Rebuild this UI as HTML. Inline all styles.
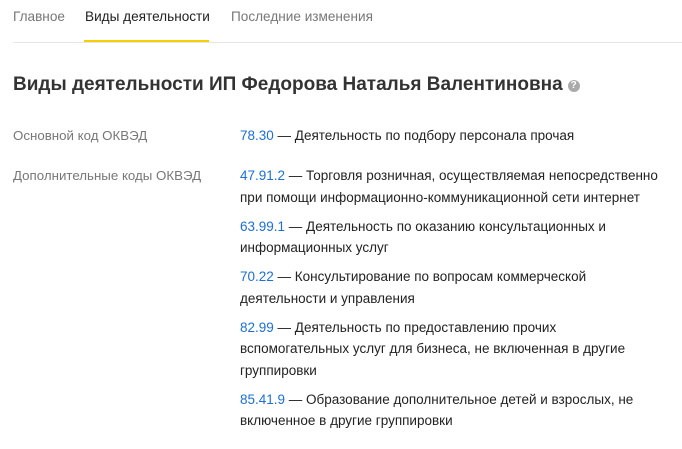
<!DOCTYPE html><html><head><meta charset="utf-8"><style>
body{margin:0;background:#fff;font-family:"Liberation Sans",sans-serif;color:#333;width:682px;height:449px;overflow:hidden}
.tabs{position:absolute;left:13px;top:0;right:0;height:42px;border-bottom:1px solid #e6e6e6}
.tab{position:absolute;top:9px;font-size:13.6px;color:#777}
.tab.a{color:#222}
.ul{position:absolute;left:84px;top:40px;width:125px;height:2px;background:#f5d000}
h1{position:absolute;left:13px;top:74px;margin:0;font-size:19px;font-weight:bold;color:#333;white-space:nowrap}
.q{display:inline-block;width:12px;height:12px;border-radius:50%;background:#aaa;color:#fff;font-size:10px;line-height:12px;text-align:center;vertical-align:2px;margin-left:5px}
.l{position:absolute;left:13px;font-size:13.3px;color:#777}
.r{position:absolute;left:240px;width:440px;font-size:13.5px;line-height:21.5px;color:#222;white-space:nowrap}
.r p{margin:0 0 7.5px}
a{color:#1a6fdb;text-decoration:none}
</style></head><body>
<div class="tabs"></div>
<div class="tab" style="left:13px">Главное</div>
<div class="tab a" style="left:85px">Виды деятельности</div>
<div class="tab" style="left:231px">Последние изменения</div>
<div class="ul"></div>
<h1>Виды деятельности ИП Федорова Наталья Валентиновна<span class="q">?</span></h1>
<div class="l" style="top:128px">Основной код ОКВЭД</div>
<div class="r" style="top:125px"><a>78.30</a> — Деятельность по подбору персонала прочая</div>
<div class="l" style="top:168px">Дополнительные коды ОКВЭД</div>
<div class="r" style="top:165px">
<p><a>47.91.2</a> — Торговля розничная, осуществляемая непосредственно<br>при помощи информационно-коммуникационной сети интернет</p>
<p><a>63.99.1</a> — Деятельность по оказанию консультационных и<br>информационных услуг</p>
<p><a>70.22</a> — Консультирование по вопросам коммерческой<br>деятельности и управления</p>
<p><a>82.99</a> — Деятельность по предоставлению прочих<br>вспомогательных услуг для бизнеса, не включенная в другие<br>группировки</p>
<p><a>85.41.9</a> — Образование дополнительное детей и взрослых, не<br>включенное в другие группировки</p>
</div>
</body></html>
